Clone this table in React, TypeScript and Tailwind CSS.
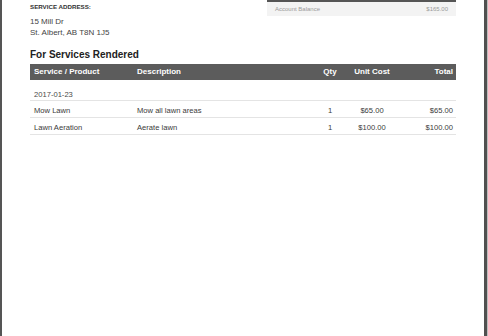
import React from "react";

const font = { fontFamily: '"Liberation Sans", Arial, sans-serif' };

const rows = [
  { name: "Mow Lawn", desc: "Mow all lawn areas", qty: "1", unit: "$65.00", total: "$65.00" },
  { name: "Lawn Aeration", desc: "Aerate lawn", qty: "1", unit: "$100.00", total: "$100.00" },
];

export default function App() {
  return (
    <div className="flex h-[336px] w-[488px] overflow-hidden bg-white" style={font}>
      <div className="h-full w-[2px] bg-[#555555]" />
      <div className="flex-1 px-[28px]">
        {/* top: address + balance */}
        <div className="flex justify-between">
          <div className="pt-[3px]">
            <div className="text-[6.2px] font-bold leading-[8px] text-[#333]">SERVICE ADDRESS:</div>
            <div className="mt-[5px] text-[8px] leading-[11px] text-[#444]">
              <div>15 Mill Dr</div>
              <div>St. Albert, AB T8N 1J5</div>
            </div>
          </div>
          <div className="w-[189px]">
            <div className="h-[2px] bg-[#555555]" />
            <div className="flex h-[14px] items-center justify-between bg-[#f3f3f3] px-[8px] text-[6px] text-[#9a9a9a]">
              <span>Account Balance</span>
              <span>$165.00</span>
            </div>
          </div>
        </div>

        <h2 className="mt-[11px] text-[10px] font-bold leading-[12px] text-[#222]">For Services Rendered</h2>

        {/* table */}
        <div className="mt-[3px] text-[7.6px]">
          <div className="grid h-[16px] grid-cols-[103px_177px_40px_44px_1fr] items-center bg-[#5c5c5c] text-[8px] font-bold text-white">
            <div className="pl-[4px]">Service / Product</div>
            <div className="pl-[4px]">Description</div>
            <div className="text-center">Qty</div>
            <div className="text-center">Unit Cost</div>
            <div className="pr-[3px] text-right">Total</div>
          </div>
          <div className="h-[21px] border-b border-[#e4e4e4] pl-[4px] pt-[10px] leading-[9px] text-[#4a4a4a]">2017-01-23</div>
          {rows.map((r) => (
            <div
              key={r.name}
              className="grid h-[17px] grid-cols-[103px_177px_40px_44px_1fr] items-center border-b border-[#e4e4e4] pt-[3px] text-[#3a3a3a]"
            >
              <div className="pl-[4px]">{r.name}</div>
              <div className="pl-[4px]">{r.desc}</div>
              <div className="text-center">{r.qty}</div>
              <div className="text-center">{r.unit}</div>
              <div className="pr-[3px] text-right">{r.total}</div>
            </div>
          ))}
        </div>
      </div>
      <div className="h-full w-[3px] bg-[#505050]" />
      <div className="h-full w-[1px] bg-[#bdbdbd]" />
    </div>
  );
}
